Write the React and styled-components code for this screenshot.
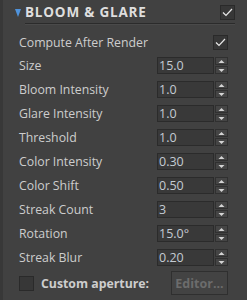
import React from "react";
import styled, { createGlobalStyle } from "styled-components";

const Global = createGlobalStyle`
  html, body { margin: 0; padding: 0; background: #414141; }
  body { font-family: "Open Sans", "Noto Sans", sans-serif; }
`;

const Panel = styled.div`
  width: 247px;
  height: 300px;
  box-sizing: border-box;
  background: #414141;
  border-left: 3px solid #383838;
  padding-left: 12px;
  overflow: hidden;
`;

const Header = styled.div`
  display: flex;
  align-items: flex-start;
  height: 24px;
`;

const Triangle = styled.div`
  width: 0;
  height: 0;
  margin-top: 9px;
  margin-right: 4px;
  border-left: 3.5px solid transparent;
  border-right: 3.5px solid transparent;
  border-top: 8px solid #4f93dc;
`;

const TitleBlock = styled.div`
  display: flex;
  align-items: center;
  justify-content: space-between;
  width: 210px;
  height: 23px;
  border-bottom: 1px solid #2b2b2b;
  box-shadow: 0 1px 0 #4a4a4a;
`;

const Title = styled.span`
  font-weight: 700;
  font-size: 13.5px;
  color: #dedede;
  letter-spacing: 0.8px;
  padding-top: 1px;
`;

const Box = styled.div`
  box-sizing: border-box;
  width: ${(p) => p.$size || 15}px;
  height: ${(p) => p.$size || 15}px;
  background: #373737;
  border: 1px solid #2a2a2a;
  display: flex;
  align-items: center;
  justify-content: center;
  margin-top: ${(p) => p.$top || 0}px;
  align-self: ${(p) => (p.$top ? "flex-start" : "center")};
`;

const Body = styled.div`
  display: flex;
  flex-direction: column;
  padding-left: 4px;
  width: 209px;
  padding-top: 10px;
`;

const Row = styled.div`
  display: flex;
  align-items: center;
  justify-content: space-between;
  height: 17px;
  margin-bottom: ${(p) => p.$gap ?? 7}px;
`;

const Label = styled.span`
  font-size: 12.3px;
  color: #cdcdcd;
  line-height: 17px;
  font-weight: ${(p) => (p.$bold ? 700 : 400)};
`;

const Spin = styled.div`
  display: flex;
  align-items: stretch;
  height: 17px;
`;

const Input = styled.div`
  box-sizing: border-box;
  width: 57px;
  height: 17px;
  background: #393939;
  border: 1px solid #2b2b2b;
  color: #c4cbd3;
  font-size: 12.5px;
  line-height: 15px;
  padding-left: 1px;
`;

const Buttons = styled.div`
  display: flex;
  flex-direction: column;
  justify-content: space-between;
  width: 13px;
  margin-left: 1px;
`;

const SpinBtn = styled.div`
  box-sizing: border-box;
  height: 8px;
  background: #454545;
  border: 1px solid #303030;
  display: flex;
  align-items: center;
  justify-content: center;
`;

const Check = () => (
  <svg width="11" height="9" viewBox="0 0 11 9">
    <path d="M1 4.5 L4 7.5 L10 1" stroke="#e8e8e8" strokeWidth="1.2" fill="none" />
  </svg>
);

const Arrow = ({ up }) => (
  <svg width="7" height="5" viewBox="0 0 7 5">
    {up ? (
      <path d="M0.5 4 L3.5 1 L6.5 4 Z" fill="#d4d4d4" />
    ) : (
      <path d="M0.5 1 L3.5 4 L6.5 1 Z" fill="#d4d4d4" />
    )}
  </svg>
);

const FooterRow = styled.div`
  display: flex;
  align-items: center;
  height: 24px;
  margin-top: -2px;
`;

const CheckLabel = styled(Label)`
  margin-left: 7px;
  flex: 1;
`;

const EditorButton = styled.div`
  box-sizing: border-box;
  width: 57px;
  height: 24px;
  border: 1px solid #2f2f2f;
  background: #434343;
  color: #6c6c6c;
  font-size: 12.5px;
  font-weight: 700;
  display: flex;
  align-items: center;
  justify-content: center;
`;

const fields = [
  ["Size", "15.0"],
  ["Bloom Intensity", "1.0"],
  ["Glare Intensity", "1.0"],
  ["Threshold", "1.0"],
  ["Color Intensity", "0.30"],
  ["Color Shift", "0.50"],
  ["Streak Count", "3"],
  ["Rotation", "15.0°"],
  ["Streak Blur", "0.20"],
];

export default function App() {
  return (
    <>
      <Global />
      <Panel>
        <Header>
          <Triangle />
          <TitleBlock>
            <Title>BLOOM &amp; GLARE</Title>
            <Box $top={5}>
              <Check />
            </Box>
          </TitleBlock>
        </Header>
        <Body>
          <Row $gap={6}>
            <Label>Compute After Render</Label>
            <Box>
              <Check />
            </Box>
          </Row>
          {fields.map(([label, value]) => (
            <Row key={label}>
              <Label>{label}</Label>
              <Spin>
                <Input>{value}</Input>
                <Buttons>
                  <SpinBtn>
                    <Arrow up />
                  </SpinBtn>
                  <SpinBtn>
                    <Arrow />
                  </SpinBtn>
                </Buttons>
              </Spin>
            </Row>
          ))}
          <FooterRow>
            <Box />
            <CheckLabel $bold>Custom aperture:</CheckLabel>
            <EditorButton>Editor...</EditorButton>
          </FooterRow>
        </Body>
      </Panel>
    </>
  );
}
